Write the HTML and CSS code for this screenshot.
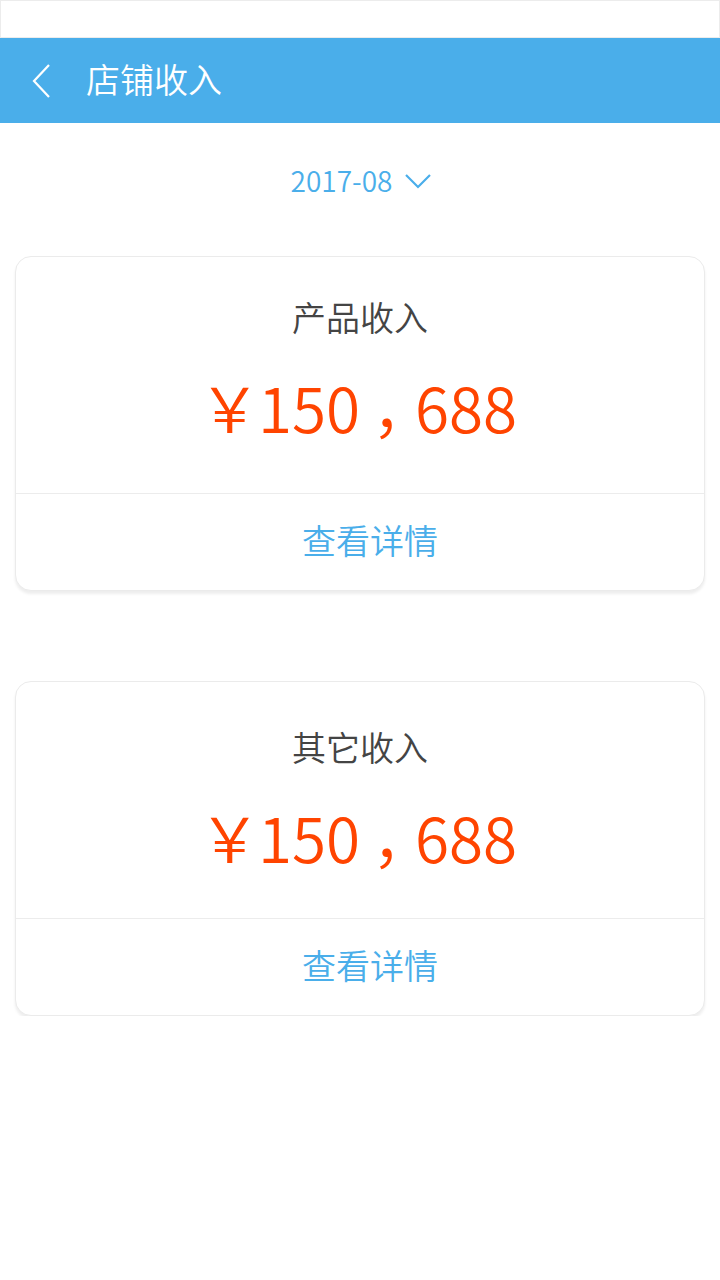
FILE: index.html
```html
<!DOCTYPE html>
<html lang="zh-CN">
<head>
<meta charset="utf-8">
<title>店铺收入</title>
<link rel="stylesheet" href="styles.css">
</head>
<body>
<div class="status"></div>
<header class="topbar">
  <span class="back">
    <svg width="20" height="36" viewBox="0 0 20 36"><polyline points="17,1 2,17 17,33" fill="none" stroke="#fff" stroke-width="2.2"/></svg>
  </span>
  <h1 class="title">店铺收入</h1>
</header>
<div class="date-row">
  <span class="date">2017-08</span>
  <svg class="caret" width="26" height="16" viewBox="0 0 26 16"><polyline points="1,2 13,14 25,2" fill="none" stroke="#4aaeea" stroke-width="2.2"/></svg>
</div>
<main class="cards">
  <section class="card">
    <div class="card-top">
      <div class="card-title">产品收入</div>
      <div class="amount"><span class="yen">￥</span>150<span class="sep">，</span>688</div>
    </div>
    <div class="card-link">查看详情</div>
  </section>
  <section class="card">
    <div class="card-top lower">
      <div class="card-title">其它收入</div>
      <div class="amount"><span class="yen">￥</span>150<span class="sep">，</span>688</div>
    </div>
    <div class="card-link">查看详情</div>
  </section>
</main>
</body>
</html>
```
FILE: styles.css
```css
* { box-sizing: border-box; }
html, body { margin: 0; padding: 0; background: #fff; }
body {
  width: 720px;
  font-family: "Noto Sans CJK SC", "Noto Sans", sans-serif;
}
.status {
  height: 38px;
  border: 1px solid #ececec;
  background: #fff;
}
.topbar {
  height: 85px;
  background: #4aaeea;
  display: flex;
  align-items: center;
  padding-left: 32px;
}
.back { display: flex; width: 20px; height: 36px; margin-top: 2px; }
.title {
  margin: 0 0 0 34px;
  font-size: 34px;
  font-weight: 350;
  color: #fff;
  line-height: 40px;
  margin-top: -3px;
}
.date-row {
  height: 133px;
  display: flex;
  align-items: center;
  justify-content: center;
  gap: 13px;
  padding-left: 2px;
  padding-bottom: 20px;
}
.date {
  font-size: 28px;
  font-weight: 350;
  color: #4aaeea;
  line-height: 34px;
}
.caret { margin-top: 2px; }
.cards {
  display: flex;
  flex-direction: column;
  gap: 90px;
  padding: 0 15px;
}
.card {
  width: 690px;
  height: 335px;
  border: 1px solid #ebebeb;
  border-radius: 16px;
  box-shadow: 0 3px 3px rgba(0,0,0,0.07);
  display: flex;
  flex-direction: column;
  background: #fff;
}
.card-top {
  height: 237px;
  border-bottom: 1px solid #ececec;
  display: flex;
  flex-direction: column;
  align-items: center;
  padding-top: 40px;
}
.card-top.lower { padding-top: 45px; }
.card-title {
  font-size: 34px;
  font-weight: 350;
  line-height: 40px;
  color: #444;
}
.amount {
  margin-top: 34px;
  font-size: 62px;
  font-weight: 350;
  line-height: 70px;
  color: #ff4400;
  padding-right: 4px;
}
.yen { margin-right: -3px; }
.sep {
  font-feature-settings: "halt" 1;
  padding: 0 12px;
}
.card-link {
  flex: 1;
  display: flex;
  align-items: center;
  justify-content: center;
  font-size: 34px;
  font-weight: 350;
  color: #4aaeea;
  padding-left: 20px;
  padding-bottom: 6px;
}
```
